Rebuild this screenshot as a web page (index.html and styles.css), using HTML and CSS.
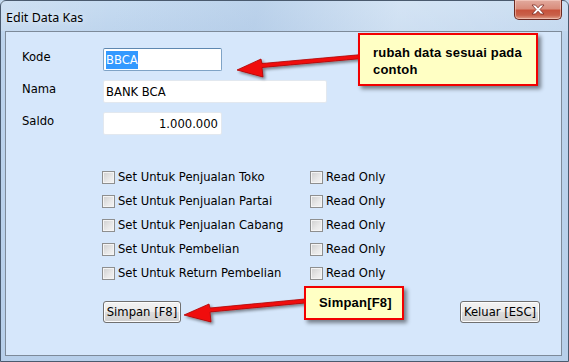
FILE: index.html
```html
<!DOCTYPE html>
<html>
<head>
<meta charset="utf-8">
<link rel="stylesheet" href="styles.css">
</head>
<body>
<div class="window">
  <div class="titlebar">
    <span class="title">Edit Data Kas</span>
    <div class="close"><svg width="16" height="11" viewBox="0 0 16 11"><path d="M2 1 L5.5 1 L8 3.8 L10.5 1 L14 1 L10 5.5 L14 10 L10.5 10 L8 7.2 L5.5 10 L2 10 L6 5.5 Z" fill="#fff" stroke="#7a2a22" stroke-width="0.8"/></svg></div>
  </div>
  <div class="client">
    <div class="fields">
      <label class="lbl">Kode</label>
      <div class="input short focused"><span class="sel">BBCA</span></div>
      <label class="lbl">Nama</label>
      <div class="input long">BANK BCA</div>
      <label class="lbl">Saldo</label>
      <div class="input short right">1.000.000</div>
    </div>
    <div class="checks">
      <div class="chk"><span class="box"></span>Set Untuk Penjualan Toko</div>
      <div class="chk"><span class="box"></span>Read Only</div>
      <div class="chk"><span class="box"></span>Set Untuk Penjualan Partai</div>
      <div class="chk"><span class="box"></span>Read Only</div>
      <div class="chk"><span class="box"></span>Set Untuk Penjualan Cabang</div>
      <div class="chk"><span class="box"></span>Read Only</div>
      <div class="chk"><span class="box"></span>Set Untuk Pembelian</div>
      <div class="chk"><span class="box"></span>Read Only</div>
      <div class="chk"><span class="box"></span>Set Untuk Return Pembelian</div>
      <div class="chk"><span class="box"></span>Read Only</div>
    </div>
    <div class="buttons">
      <button class="btn simpan">Simpan [F8]</button>
      <button class="btn keluar">Keluar [ESC]</button>
    </div>
  </div>

  <svg class="arrows" width="569" height="362" viewBox="0 0 569 362">
    <defs>
      <filter id="sh" x="-10%" y="-50%" width="130%" height="250%">
        <feGaussianBlur in="SourceAlpha" stdDeviation="1.5"/>
        <feOffset dx="2" dy="2"/>
        <feComponentTransfer><feFuncA type="linear" slope="0.45"/></feComponentTransfer>
        <feMerge><feMergeNode/><feMergeNode in="SourceGraphic"/></feMerge>
      </filter>
    </defs>
    <g filter="url(#sh)">
      <polygon points="362,54.5 262,63.5 261,59 237,70 263,77 262,67.5 362,58.5" fill="#f01010" stroke="#b00000" stroke-width="0.8"/>
      <polygon points="305,299 210,308 209,304 184,315 211,322 210,312 305,303" fill="#f01010" stroke="#b00000" stroke-width="0.8"/>
    </g>
  </svg>
  <div class="callout c1">rubah data sesuai pada<br>contoh</div>
  <div class="callout c2">Simpan[F8]</div>
</div>
</body>
</html>
```

FILE: styles.css
```css
* { box-sizing: border-box; }
html, body { margin: 0; padding: 0; }
body { width: 569px; height: 362px; overflow: hidden; background: #c2d8ef; }

.window {
  position: relative;
  width: 569px;
  height: 362px;
  background: linear-gradient(to bottom, #c6dbf1 0px, #bcd3ec 40px, #b7cfea 100%);
  border: 1px solid #4a5a6e;
  border-radius: 6px 6px 0 0;
  display: flex;
  flex-direction: column;
  padding: 0 6px 5px 4px;
}

.titlebar {
  height: 30px;
  display: flex;
  align-items: flex-start;
  justify-content: space-between;
  background: linear-gradient(100deg, rgba(255,255,255,0.15) 0%, rgba(255,255,255,0) 20%, rgba(170,195,225,0.35) 45%, rgba(255,255,255,0.25) 70%, rgba(255,255,255,0.1) 100%);
  margin: 0 -6px 0 -4px;
  padding: 0 6px 0 5px;
}
.title {
  font-family: "Noto Sans", "Open Sans", sans-serif;
  font-size: 12.5px;
  color: #000;
  margin-top: 8px;
  text-shadow: 0 0 6px rgba(255,255,255,0.9);
}
.close {
  width: 48px;
  height: 20px;
  margin-top: -1px;
  border: 1px solid #6b2a22;
  border-top: none;
  border-radius: 0 0 5px 5px;
  background: linear-gradient(to bottom, #e2aa9e 0%, #d98d7c 45%, #c7533c 55%, #c9614a 80%, #e0a08a 100%);
  box-shadow: inset 0 0 0 1px rgba(255,220,210,0.5);
  display: flex;
  align-items: center;
  justify-content: center;
}

.client {
  flex: 1;
  background: #d6e7fb;
  border: 1px solid #7d8a99;
  position: relative;
  padding: 16px 0 0 16px;
  font-family: "DejaVu Sans", Verdana, sans-serif;
  font-size: 11.6px;
  color: #000;
}

.fields {
  display: grid;
  grid-template-columns: 81px auto;
  row-gap: 9px;
  align-items: center;
  justify-items: start;
}
.lbl { line-height: 23px; margin-top: -4px; }
.input {
  height: 23px;
  background: #fff;
  border: 1px solid #e2e8ef;
  border-radius: 2px;
  padding: 0 3px 0 2px;
  display: flex;
  align-items: center;
}
.input.short { width: 119px; }
.input.long { width: 224px; }
.input.right { justify-content: flex-end; }
.input.focused { border-color: #7fa3c6; border-top-color: #5e87b0; }
.sel { background: #3399ff; color: #fff; padding: 2px 0; line-height: 14px; }

.checks {
  display: grid;
  grid-template-columns: 208px auto;
  margin: 36px 0 0 80px;
  row-gap: 11px;
}
.chk { display: flex; align-items: center; height: 13px; line-height: 13px; }
.box {
  width: 13px;
  height: 13px;
  border: 1px solid #8e8f8f;
  background: linear-gradient(135deg, #cfcfcf 0%, #e9e9e9 60%, #f4f4f4 100%);
  box-shadow: inset 0 0 0 1px #f4f4f4;
  margin-right: 3px;
  flex: none;
}

.buttons {
  display: flex;
  justify-content: space-between;
  margin: 21px 0 0 81px;
  padding-right: 21px;
}
.btn {
  height: 22px;
  padding: 0;
  font-family: "DejaVu Sans", Verdana, sans-serif;
  font-size: 11.6px;
  color: #000;
  border: 1px solid #707070;
  border-radius: 3px;
  background: linear-gradient(to bottom, #f2f2f2 0%, #ebebeb 50%, #dddddd 51%, #cfcfcf 100%);
  box-shadow: inset 0 0 0 1px #fcfcfc;
}
.simpan { width: 78px; }
.keluar { width: 80px; }

.arrows { position: absolute; left: -1px; top: -1px; pointer-events: none; }

.callout {
  position: absolute;
  background: #ffffc4;
  border: 2px solid #f20000;
  box-shadow: 3px 3px 4px rgba(0,0,0,0.45);
  font-family: "Liberation Sans", Arial, sans-serif;
  font-weight: bold;
  font-size: 13px;
  color: #000;
}
.c1 {
  left: 357px;
  top: 32px;
  width: 180px;
  height: 53px;
  padding: 9px 0 0 13px;
  line-height: 17px;
  letter-spacing: 0.2px;
}
.c2 {
  left: 303px;
  top: 285px;
  width: 100px;
  height: 34px;
  padding: 6px 0 0 13px;
  line-height: 17px;
  letter-spacing: 0.2px;
}
```
